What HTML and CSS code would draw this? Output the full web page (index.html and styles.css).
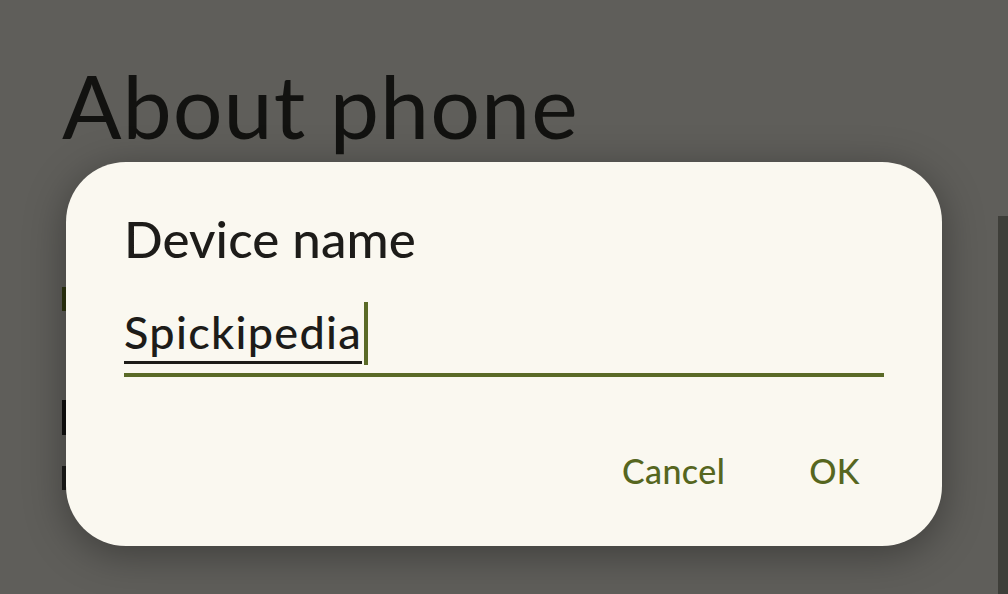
FILE: index.html
```html
<!DOCTYPE html>
<html>
<head>
<meta charset="utf-8">
<link rel="stylesheet" href="styles.css">
</head>
<body>
<div class="page">
  <h1 class="page-title">About phone</h1>
  <div class="list">
    <span class="frag frag-accent"></span>
    <span class="frag frag-title"></span>
    <span class="frag frag-sub"></span>
  </div>
  <div class="edge-bar"></div>
</div>

<div class="dialog">
  <div class="dialog-title">Device name</div>
  <div class="field">
    <span class="field-text">Spickipedia</span><span class="caret"></span>
  </div>
  <div class="actions">
    <span class="btn">Cancel</span>
    <span class="btn">OK</span>
  </div>
</div>
</body>
</html>
```

FILE: styles.css
```css
html, body {
  margin: 0;
  padding: 0;
  width: 1008px;
  height: 594px;
  overflow: hidden;
  background: #5f5e5a;
  font-family: "Lato", "Open Sans", sans-serif;
}

.page {
  position: relative;
  height: 594px;
  padding-left: 62px;
  box-sizing: border-box;
}

.page-title {
  margin: 0;
  padding-top: 50px;
  font-size: 88px;
  font-weight: 400;
  line-height: 110px;
  color: #121210;
  letter-spacing: 1px;
}

.list {
  display: flex;
  flex-direction: column;
  align-items: flex-start;
}

.frag {
  display: block;
  width: 4px;
}

.frag-accent {
  margin-top: 127px;
  height: 24px;
  background: #2e3510;
}

.frag-title {
  margin-top: 89px;
  height: 35px;
  background: #111110;
}

.frag-sub {
  margin-top: 31px;
  height: 24px;
  background: #1c1c1a;
}

.edge-bar {
  position: absolute;
  left: 998px;
  top: 216px;
  width: 10px;
  bottom: 0;
  background: #3e3e39;
}

.dialog {
  position: absolute;
  left: 66px;
  top: 162px;
  width: 876px;
  height: 384px;
  box-sizing: border-box;
  border-radius: 60px;
  background: #faf8f0;
  box-shadow: 0 8px 40px rgba(0, 0, 0, 0.35);
  padding: 0 58px;
  display: flex;
  flex-direction: column;
}

.dialog-title {
  margin-top: 47px;
  font-size: 51px;
  line-height: 60px;
  font-weight: 500;
  color: #1d1c19;
  letter-spacing: 0.1px;
}

.field {
  margin-top: 29px;
  display: flex;
  align-items: flex-start;
  height: 75px;
  border-bottom: 4px solid #5a6a27;
  width: 760px;
}

.field-text {
  margin-top: 8px;
  padding-bottom: 3px;
  font-size: 45px;
  line-height: 52px;
  font-weight: 500;
  color: #1d1c19;
  border-bottom: 3px solid #1d1c19;
  letter-spacing: 1.3px;
}

.caret {
  display: block;
  width: 4px;
  height: 63px;
  margin-top: 4px;
  margin-left: 2px;
  background: #5a6a27;
}

.actions {
  margin-top: 74px;
  display: flex;
  justify-content: flex-end;
  gap: 84px;
  padding-right: 24px;
}

.btn {
  font-size: 34px;
  line-height: 40px;
  color: #56661f;
  font-weight: 500;
  letter-spacing: 0.4px;
}
```
